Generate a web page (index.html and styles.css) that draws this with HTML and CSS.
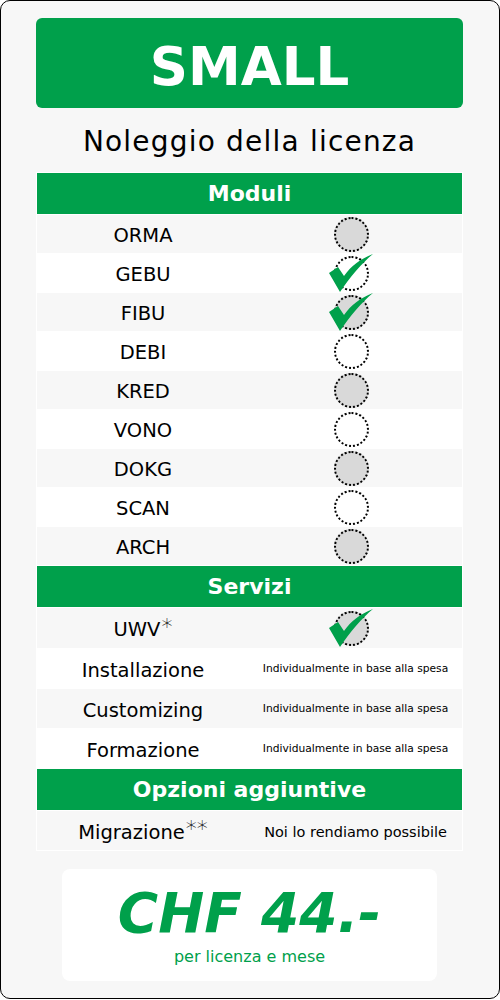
FILE: index.html
```html
<!DOCTYPE html>
<html>
<head>
<meta charset="utf-8">
<link rel="stylesheet" href="styles.css">
</head>
<body>
<div class="frame">
  <div class="title">SMALL</div>
  <div class="subtitle">Noleggio della licenza</div>
  <div class="table">
    <div class="sec">Moduli</div>
    <div class="row alt"><div class="lbl">ORMA</div><div class="val"><span class="mark"><span class="dot"></span></span></div></div>
    <div class="row"><div class="lbl">GEBU</div><div class="val"><span class="mark"><span class="dot"></span><svg class="check" viewBox="0 0 44 38" width="44" height="38"><path d="M0,19 L9,13 L15,22 C22,12 31,5 44,0 C33,9 21,23 11,38 Z"/></svg></span></div></div>
    <div class="row alt"><div class="lbl">FIBU</div><div class="val"><span class="mark"><span class="dot"></span><svg class="check" viewBox="0 0 44 38" width="44" height="38"><path d="M0,19 L9,13 L15,22 C22,12 31,5 44,0 C33,9 21,23 11,38 Z"/></svg></span></div></div>
    <div class="row"><div class="lbl">DEBI</div><div class="val"><span class="mark"><span class="dot"></span></span></div></div>
    <div class="row alt"><div class="lbl">KRED</div><div class="val"><span class="mark"><span class="dot"></span></span></div></div>
    <div class="row"><div class="lbl">VONO</div><div class="val"><span class="mark"><span class="dot"></span></span></div></div>
    <div class="row alt"><div class="lbl">DOKG</div><div class="val"><span class="mark"><span class="dot"></span></span></div></div>
    <div class="row"><div class="lbl">SCAN</div><div class="val"><span class="mark"><span class="dot"></span></span></div></div>
    <div class="row alt"><div class="lbl">ARCH</div><div class="val"><span class="mark"><span class="dot"></span></span></div></div>
    <div class="sec">Servizi</div>
    <div class="row alt srv first"><div class="lbl"><span>UWV<span class="ast">*</span></span></div><div class="val"><span class="mark"><span class="dot"></span><svg class="check" viewBox="0 0 44 38" width="44" height="38"><path d="M0,19 L9,13 L15,22 C22,12 31,5 44,0 C33,9 21,23 11,38 Z"/></svg></span></div></div>
    <div class="row srv"><div class="lbl">Installazione</div><div class="val small">Individualmente in base alla spesa</div></div>
    <div class="row alt srv"><div class="lbl">Customizing</div><div class="val small">Individualmente in base alla spesa</div></div>
    <div class="row srv"><div class="lbl">Formazione</div><div class="val small">Individualmente in base alla spesa</div></div>
    <div class="sec">Opzioni aggiuntive</div>
    <div class="row alt srv"><div class="lbl"><span>Migrazione<span class="ast two">**</span></span></div><div class="val mid">Noi lo rendiamo possibile</div></div>
  </div>
  <div class="price">
    <div class="amount">CHF 44.-</div>
    <div class="per">per licenza e mese</div>
  </div>
</div>
</body>
</html>
```

FILE: styles.css
```css
* { box-sizing: border-box; }
html, body { margin: 0; padding: 0; background: #fff; }
body { font-family: "DejaVu Sans", Verdana, sans-serif; color: #000; }

.frame {
  width: 500px;
  height: 999px;
  border: 1px solid #000;
  border-radius: 10px;
  background: #f7f7f7;
  padding: 17px 36px 0 35px;
  display: flex;
  flex-direction: column;
}

.title {
  height: 90px;
  background: #00a04b;
  border-radius: 6px;
  color: #fff;
  font-weight: bold;
  font-size: 53px;
  line-height: 83px;
  padding-top: 7px;
  text-align: center;
}

.subtitle {
  height: 64px;
  font-size: 28px;
  letter-spacing: 1.2px;
  text-align: center;
  padding-top: 3px;
  line-height: 61px;
}

.table {
  background: #fff;
  padding: 1px;
  display: flex;
  flex-direction: column;
  gap: 1px;
}

.sec {
  height: 41px;
  background: #00a04b;
  color: #fff;
  font-weight: bold;
  font-size: 22px;
  display: flex;
  align-items: center;
  justify-content: center;
}

.row {
  height: 38px;
  display: grid;
  grid-template-columns: 212px 1fr;
  background: #fff;
}
.row.alt { background: #f7f7f7; }
.row.srv { height: 39px; }
.row.srv.first { height: 40px; }

.lbl {
  font-size: 19.5px;
  display: flex;
  align-items: center;
  justify-content: center;
  padding-top: 3px;
}

.ast {
  font-size: 22px;
  font-weight: 200;
  line-height: 0;
  vertical-align: 2px;
  margin-left: 1px;
}
.ast.two { vertical-align: 3px; }

.val {
  display: flex;
  align-items: center;
  justify-content: center;
  padding-right: 9px;
}
.val.small { font-size: 10.7px; padding-right: 0; }
.val.mid { font-size: 14.5px; padding-right: 0; padding-top: 2px; }

.mark {
  position: relative;
  width: 44px;
  height: 35px;
  display: flex;
  align-items: center;
  justify-content: flex-start;
}

.dot {
  width: 35px;
  height: 35px;
  margin-left: 5px;
  border-radius: 50%;
  border: 2px dotted #000;
  background: #fff;
}
.row.alt .dot { background: #d9d9d9; }

.check {
  position: absolute;
  left: 0;
  top: -2px;
  fill: #00a04b;
}

.price {
  margin: 18px auto 0;
  width: 375px;
  height: 112px;
  background: #fff;
  border-radius: 8px;
  display: flex;
  flex-direction: column;
  align-items: center;
  color: #00a04b;
  padding-top: 10px;
}
.amount {
  font-size: 55px;
  font-weight: bold;
  font-style: italic;
  line-height: 68px;
}
.per {
  font-size: 16px;
  line-height: 20px;
}
```
